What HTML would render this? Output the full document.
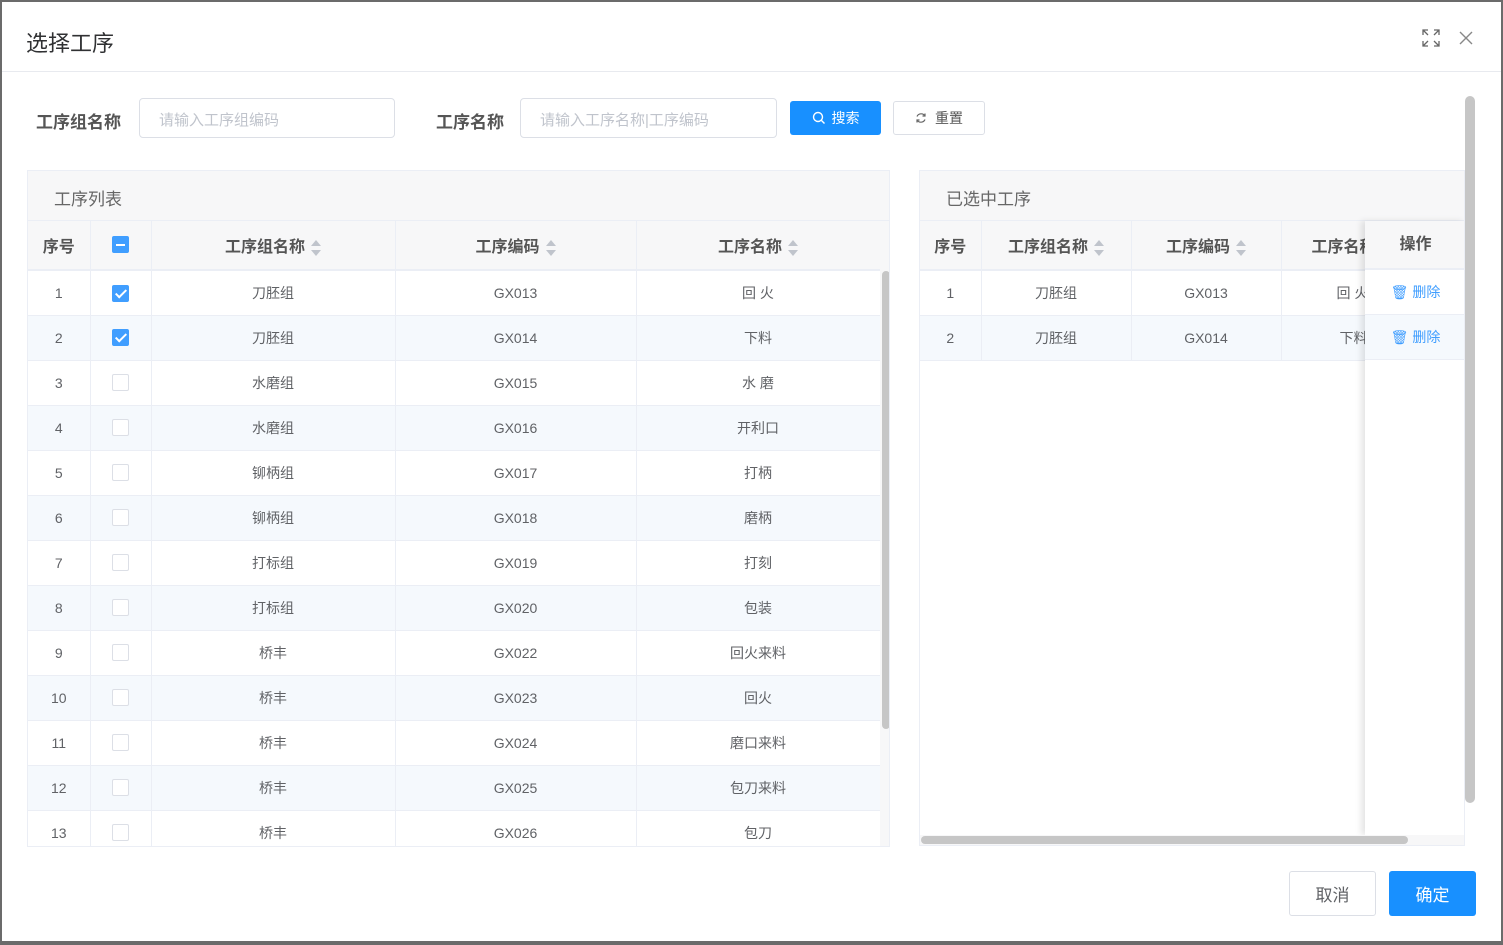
<!DOCTYPE html>
<html><head><meta charset="utf-8"><style>
*{box-sizing:border-box;margin:0;padding:0}
body{width:1503px;height:945px;background:#6b6b6b;font-family:"Liberation Sans","Noto Sans CJK SC",sans-serif;position:relative;overflow:hidden;color:#606266}
.dlg{position:absolute;left:2px;top:2px;width:1499px;height:939px;background:#fff}
.abs{position:absolute}
.title{left:24px;top:24px;font-size:22px;color:#303133}
.hline{left:0;top:69px;width:1499px;height:1px;background:#e8eaef}
.lbl{font-size:17px;font-weight:bold;color:#555;top:106px}
.inp{border:1px solid #dcdfe6;border-radius:4px;height:40px;top:96px;font-size:15px;color:#c0c4cc;padding:10px 0 0 19px}
.btn{border-radius:3px;font-size:14px;display:flex;align-items:center;justify-content:center}
.panel{border:1px solid #ebeef5;background:#fff}
.ph{position:absolute;left:0;top:0;right:0;height:50px;background:#f7f7f8;border-bottom:1px solid #ebeef5;font-size:17px;color:#666;padding:14px 0 0 26px}
table{border-collapse:collapse;position:absolute;table-layout:fixed}
td,th{border-right:1px solid #ebeef5;border-bottom:1px solid #ebeef5;text-align:center;font-size:14px;color:#606266;height:45px;padding:0;white-space:nowrap;overflow:hidden}
th{background:#f7f7f8;font-weight:bold;font-size:16px;color:#555;height:49px;border-bottom:2px solid #ebeef5}
tr.alt td{background:#f5f9fd}
.sort{display:inline-block;vertical-align:middle;margin-left:6px;width:10px;height:16px;position:relative}
.sort:before{content:"";position:absolute;left:0;top:0;border:5px solid transparent;border-bottom:6px solid #c0c4cc;border-top:0}
.sort:after{content:"";position:absolute;left:0;bottom:0;border:5px solid transparent;border-top:6px solid #c0c4cc;border-bottom:0}
.cb{display:inline-block;width:17px;height:17px;border:1px solid #dcdfe6;border-radius:2px;background:#fff;vertical-align:middle;position:relative}
.cb.on{background:#409eff;border-color:#409eff}
.cb.on:after{content:"";position:absolute;left:5px;top:1px;width:4px;height:9px;border:solid #fff;border-width:0 2px 2px 0;transform:rotate(45deg)}
.cb.ind{background:#409eff;border-color:#409eff}
.cb.ind:after{content:"";position:absolute;left:3px;top:7px;width:9px;height:2px;background:#fff}
.del{color:#409eff;font-size:14px}
</style></head><body>
<div class="dlg">
<div class="abs title">选择工序</div>
<svg class="abs" style="left:1420px;top:27px" width="18" height="18" viewBox="0 0 18 18" fill="none" stroke="#666" stroke-width="1.3"><path d="M1 6V1h5M1 1l5 5M12 1h5v5M17 1l-5 5M1 12v5h5M1 17l5-5M17 12v5h-5M17 17l-5-5"/></svg>
<svg class="abs" style="left:1457px;top:29px" width="14" height="14" viewBox="0 0 14 14" stroke="#888" stroke-width="1.4"><path d="M1 1l12 12M13 1L1 13"/></svg>
<div class="abs hline"></div>

<div class="abs lbl" style="left:34px">工序组名称</div>
<div class="abs inp" style="left:137px;width:256px">请输入工序组编码</div>
<div class="abs lbl" style="left:434px">工序名称</div>
<div class="abs inp" style="left:518px;width:257px">请输入工序名称|工序编码</div>
<div class="abs btn" style="left:788px;top:99px;width:91px;height:34px;background:#1890ff;color:#fff"><svg width="14" height="14" viewBox="0 0 14 14" fill="none" stroke="#fff" stroke-width="1.4" style="margin-right:6px"><circle cx="6" cy="6" r="4.5"/><path d="M9.5 9.5l3 3"/></svg>搜索</div>
<div class="abs btn" style="left:891px;top:99px;width:92px;height:34px;border:1px solid #dcdfe6;color:#555"><svg width="12" height="12" viewBox="0 0 12 12" fill="none" stroke="#666" stroke-width="1.2" style="margin-right:8px"><path d="M10 4A4.5 4.5 0 0 0 2 4.5M2 8a4.5 4.5 0 0 0 8-.5M10 1.5V4H7.5M2 10.5V8h2.5"/></svg>重置</div>

<div class="abs panel" style="left:25px;top:168px;width:863px;height:677px;overflow:hidden">
<div class="ph">工序列表</div>
<table style="left:0;top:50px;width:852px">
<colgroup><col style="width:62px"><col style="width:61px"><col style="width:244px"><col style="width:241px"><col style="width:244px"></colgroup>
<tr><th>序号</th><th><span class="cb ind"></span></th><th>工序组名称<span class="sort"></span></th><th>工序编码<span class="sort"></span></th><th>工序名称<span class="sort"></span></th></tr>
<tr><td>1</td><td><span class="cb on"></span></td><td>刀胚组</td><td>GX013</td><td>回 火</td></tr>
<tr class="alt"><td>2</td><td><span class="cb on"></span></td><td>刀胚组</td><td>GX014</td><td>下料</td></tr>
<tr><td>3</td><td><span class="cb"></span></td><td>水磨组</td><td>GX015</td><td>水 磨</td></tr>
<tr class="alt"><td>4</td><td><span class="cb"></span></td><td>水磨组</td><td>GX016</td><td>开利口</td></tr>
<tr><td>5</td><td><span class="cb"></span></td><td>铆柄组</td><td>GX017</td><td>打柄</td></tr>
<tr class="alt"><td>6</td><td><span class="cb"></span></td><td>铆柄组</td><td>GX018</td><td>磨柄</td></tr>
<tr><td>7</td><td><span class="cb"></span></td><td>打标组</td><td>GX019</td><td>打刻</td></tr>
<tr class="alt"><td>8</td><td><span class="cb"></span></td><td>打标组</td><td>GX020</td><td>包装</td></tr>
<tr><td>9</td><td><span class="cb"></span></td><td>桥丰</td><td>GX022</td><td>回火来料</td></tr>
<tr class="alt"><td>10</td><td><span class="cb"></span></td><td>桥丰</td><td>GX023</td><td>回火</td></tr>
<tr><td>11</td><td><span class="cb"></span></td><td>桥丰</td><td>GX024</td><td>磨口来料</td></tr>
<tr class="alt"><td>12</td><td><span class="cb"></span></td><td>桥丰</td><td>GX025</td><td>包刀来料</td></tr>
<tr><td>13</td><td><span class="cb"></span></td><td>桥丰</td><td>GX026</td><td>包刀</td></tr>
</table>
<div class="abs" style="left:852px;top:50px;width:11px;height:627px;background:#f7f7f8"></div>
<div class="abs" style="left:854px;top:100px;width:8px;height:458px;background:#c6c6c6;border-radius:4px"></div>
</div>

<div class="abs panel" style="left:917px;top:168px;width:546px;height:676px;overflow:hidden">
<div class="ph">已选中工序</div>
<table style="left:0;top:50px;width:560px">
<colgroup><col style="width:61px"><col style="width:150px"><col style="width:150px"><col style="width:199px"></colgroup>
<tr><th>序号</th><th>工序组名称<span class="sort"></span></th><th>工序编码<span class="sort"></span></th><th style="text-align:left;padding-left:30px">工序名称</th></tr>
<tr><td>1</td><td>刀胚组</td><td>GX013</td><td style="text-align:left;padding-left:55px">回 火</td></tr>
<tr class="alt"><td>2</td><td>刀胚组</td><td>GX014</td><td style="text-align:left;padding-left:58px">下料</td></tr>
</table>
<div class="abs" style="left:445px;top:50px;width:101px;height:614px;background:#fff;box-shadow:-4px 0 6px rgba(0,0,0,0.1)">
<div style="height:49px;background:#f7f7f8;border-bottom:2px solid #ebeef5;font-weight:bold;font-size:16px;color:#555;text-align:center;line-height:48px">操作</div>
<div style="height:45px;border-bottom:1px solid #ebeef5;text-align:center;line-height:44px" class="del">🗑︎ 删除</div>
<div style="height:45px;border-bottom:1px solid #ebeef5;text-align:center;line-height:44px;background:#f5f9fd" class="del">🗑︎ 删除</div>
</div>
<div class="abs" style="left:0;top:664px;width:546px;height:10px;background:#f7f7f8"></div>
<div class="abs" style="left:1px;top:665px;width:487px;height:8px;background:#c6c6c6;border-radius:4px"></div>
</div>
<div class="abs" style="left:1463px;top:94px;width:10px;height:707px;background:#c6c6c6;border-radius:5px"></div>

<div class="abs btn" style="left:1287px;top:869px;width:87px;height:45px;border:1px solid #dcdfe6;font-size:17px;color:#606266">取消</div>
<div class="abs btn" style="left:1387px;top:869px;width:87px;height:45px;background:#1890ff;color:#fff;font-size:17px">确定</div>
</div>
</body></html>
